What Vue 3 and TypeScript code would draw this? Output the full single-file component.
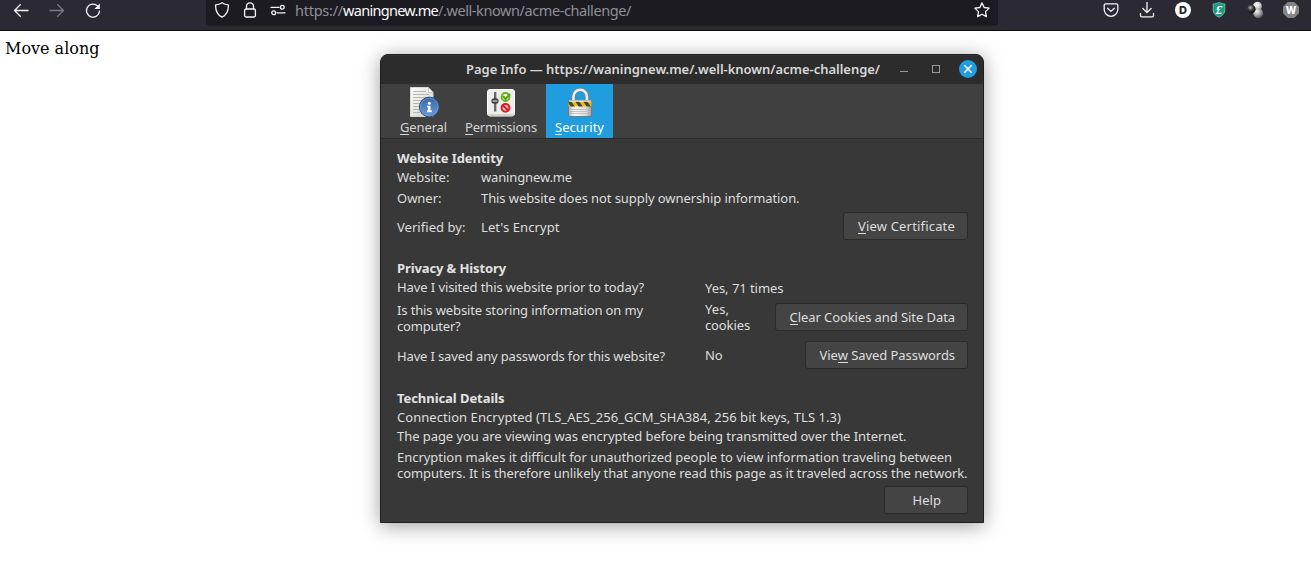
<script setup lang="ts">
import type { Directive } from 'vue'

interface ToolbarTab {
  id: string
  key: string
  rest: string
  width: number
  active: boolean
}

const tabs: ToolbarTab[] = [
  { id: 'general', key: 'G', rest: 'eneral', width: 47, active: false },
  { id: 'permissions', key: 'P', rest: 'ermissions', width: 72, active: false },
  { id: 'security', key: 'S', rest: 'ecurity', width: 49, active: true },
]

/* Tracks a single line of text so that it spans the given width in pixels. */
const vFit: Directive<HTMLElement, number> = {
  mounted(el, binding) {
    const count = (el.textContent ?? '').length
    const natural = el.getBoundingClientRect().width
    el.style.letterSpacing = `${(binding.value - natural) / count}px`
  },
}
</script>

<template>
  <div class="screen">
    <header class="chrome">
      <nav class="nav">
        <svg class="ico" viewBox="0 0 16 16"><path d="M15 8.500H1.800M7.300 2.700 1.500 8.500l5.800 5.800" /></svg>
        <svg class="ico dim" viewBox="0 0 16 16"><path d="M1 8.500h13.200M8.700 2.700l5.800 5.800-5.800 5.800" /></svg>
        <svg class="ico" viewBox="0 0 16 16">
          <path d="M12.700 4.100A6.500 6.500 0 1 0 14.500 9.100" />
          <path class="solid" d="M14.800 1.500V7H9.300z" />
        </svg>
      </nav>
      <div class="urlbar">
        <svg class="ico" viewBox="0 0 16 16"><path d="M8 .8c2 1.500 4.200 2 6.400 2.100C14.600 8.200 12.800 12.800 8 15.200 3.200 12.800 1.400 8.200 1.600 2.900 3.800 2.800 6 2.300 8 .8z" /></svg>
        <svg class="ico" viewBox="0 0 16 16"><path d="M4.500 7V4.300a3.500 3.500 0 0 1 7 0V7" /><rect x="2.600" y="7" width="10.800" height="8" rx="1.500" /></svg>
        <svg class="ico" viewBox="0 0 16 16"><path d="M1 5.300h8M7 10.800h8" /><circle cx="12.300" cy="5.300" r="1.900" /><circle cx="3.700" cy="10.800" r="1.900" /></svg>
        <div class="address">
          <span v-fit="48">https://</span><span v-fit="95" class="host">waningnew.me</span><span v-fit="193">/.well-known/acme-challenge/</span>
        </div>
        <svg class="ico star" viewBox="0 0 16 16"><path d="m8 .9 2.150 4.600 5 .65-3.650 3.500.9 5L8 12.250l-4.400 2.400.9-5L.85 6.150l5-.65z" /></svg>
      </div>
      <div class="extensions">
        <svg class="ico" viewBox="0 0 16 16"><path d="M2.600 1.800h10.800c.8 0 1.400.6 1.400 1.400v4.300a6.800 6.800 0 0 1-13.600 0V3.200c0-.8.6-1.400 1.400-1.400z" /><path d="m4.600 6.200 3.400 3.200 3.400-3.200" /></svg>
        <svg class="ico" viewBox="0 0 16 16"><path d="M8 .3v9.900M3.900 6.500 8 10.600l4.100-4.100M1.500 11.500v2c0 .8.5 1.300 1.300 1.300h10.400c.8 0 1.300-.5 1.300-1.300v-2" /></svg>
        <span class="badge round">D</span>
        <span class="badge-shield">
          <svg viewBox="0 0 16 16"><path d="M8 .4c2 1 3.900 1.500 5.800 1.500v6.400c0 3.300-2.500 5.300-5.800 7-3.300-1.700-5.800-3.700-5.800-7V1.900C4.100 1.900 6 1.400 8 .4z" fill="#1d9b80" stroke="#79c8b5" stroke-width=".8" /></svg>
          <i>£</i>
        </span>
        <svg class="spheres" viewBox="0 0 18 18">
          <defs>
            <radialGradient id="light" cx=".4" cy=".35" r=".7"><stop offset="0" stop-color="#fff" /><stop offset=".55" stop-color="#d0d0d0" /><stop offset="1" stop-color="#777" /></radialGradient>
            <radialGradient id="mid" cx=".35" cy=".3" r=".75"><stop offset="0" stop-color="#f4f4f4" /><stop offset=".5" stop-color="#aaa" /><stop offset="1" stop-color="#555" /></radialGradient>
            <radialGradient id="dark" cx=".4" cy=".35" r=".65"><stop offset="0" stop-color="#bbb" /><stop offset=".45" stop-color="#444" /><stop offset="1" stop-color="#080808" /></radialGradient>
          </defs>
          <circle cx="11.500" cy="5.200" r="4.500" fill="url(#light)" />
          <circle cx="12.200" cy="12.300" r="4.900" fill="url(#mid)" />
          <circle cx="5.300" cy="8" r="4.300" fill="url(#dark)" />
        </svg>
        <span class="badge octagon">W</span>
      </div>
    </header>

    <main class="page">
      <p class="message">Move along</p>

      <section class="dialog">
        <div class="titlebar">
          <h1><span v-fit="414">Page Info — https://waningnew.me/.well-known/acme-challenge/</span></h1>
          <div class="controls">
            <span class="minimize"></span>
            <span class="maximize"></span>
            <span class="close"><svg viewBox="0 0 18 18"><path d="m5.300 5.300 7.400 7.400M12.700 5.300l-7.400 7.400" /></svg></span>
          </div>
        </div>

        <div class="tabs">
          <div v-for="tab in tabs" :key="tab.id" class="tab" :class="[tab.id, { active: tab.active }]">
            <svg v-if="tab.id === 'general'" viewBox="0 0 32 32">
              <defs>
                <linearGradient id="paper" x2="1" y2="1"><stop stop-color="#fdfdfb" /><stop offset="1" stop-color="#d0d1ca" /></linearGradient>
                <linearGradient id="info" x2="0" y2="1"><stop stop-color="#3465a8" /><stop offset="1" stop-color="#6c9bd4" /></linearGradient>
              </defs>
              <path d="M3.500 1.500h18l4.500 5v24H3.500z" fill="url(#paper)" stroke="#d8d9d4" />
              <path d="M6 5.500h13M6 8.500h16M6 11.500h16M6 14.500h15M6 17.500h9M6 20.500h6M6 23.500h6M6 26.500h7" stroke="#b4b6b0" />
              <path d="M21.500 1.500v5H26z" fill="#fff" stroke="#aaa" stroke-width=".6" />
              <circle cx="22.300" cy="21" r="9.900" fill="url(#info)" stroke="#244b86" />
              <circle cx="22.300" cy="21" r="8.800" fill="none" stroke="#6f9ace" stroke-width=".8" />
              <circle cx="22.300" cy="17.300" r="1.500" fill="#fff" />
              <path d="M20 19.700h3.500v4.600h1.200v1.900H20v-1.900h1.100v-2.800H20z" fill="#fff" />
            </svg>
            <svg v-else-if="tab.id === 'permissions'" viewBox="0 0 32 32">
              <rect x="2.500" y="3.500" width="27" height="26.500" rx="2.500" fill="#ededeb" stroke="#fff" />
              <path d="M3 29h26" stroke="#c7c7c3" stroke-width="1.500" />
              <path d="M10 6v19.500" stroke="#444" stroke-width="1.600" />
              <path d="M11.500 6v19.500" stroke="#bbb" stroke-width="1" />
              <rect x="7" y="13" width="6" height="4" rx="1" fill="#565b5a" stroke="#252828" />
              <path d="M7.500 15h5" stroke="#ddd" />
              <circle cx="20.500" cy="11" r="4" fill="#fff" stroke="#61b516" stroke-width="1.800" />
              <path d="m17.800 10 2.700 3 4.500-5" fill="none" stroke="#57a80c" stroke-width="2.300" />
              <circle cx="20.500" cy="21.800" r="3.900" fill="#f7caca" stroke="#e01b24" stroke-width="2" />
              <path d="m17.800 19.100 5.400 5.400" stroke="#d3121b" stroke-width="1.800" />
            </svg>
            <svg v-else viewBox="0 0 32 32">
              <defs>
                <linearGradient id="metal"><stop stop-color="#aaa" /><stop offset=".25" stop-color="#f8f8f5" /><stop offset=".75" stop-color="#dededb" /><stop offset="1" stop-color="#999" /></linearGradient>
                <clipPath id="band"><rect x="4.500" y="15.500" width="23" height="5" /></clipPath>
              </defs>
              <path d="M9.500 15.500V10.500a6.700 6.700 0 0 1 13.400 0v5" fill="none" stroke="#777c78" stroke-width="4" />
              <path d="M9.500 15.500V10.500a6.700 6.700 0 0 1 13.400 0v5" fill="none" stroke="#ededea" stroke-width="2.600" />
              <rect x="4.500" y="14.500" width="23" height="16" rx="1.500" fill="url(#metal)" stroke="#777a75" />
              <path d="M5.500 23.500h21M5.500 25.500h21M5.500 27.500h21" stroke="#b9bbb7" stroke-width=".8" />
              <g clip-path="url(#band)">
                <path d="M4 15.500h24v5H4z" fill="#e3bd22" />
                <path d="m3 15 4 6h4l-4-6zm8 0 4 6h4l-4-6zm8 0 4 6h4l-4-6z" fill="#4a4528" />
              </g>
              <path d="M5 15h22" stroke="#fff" />
            </svg>
            <span v-fit="tab.width"><u>{{ tab.key }}</u>{{ tab.rest }}</span>
          </div>
        </div>

        <div class="body">
          <section class="identity">
            <h2><span v-fit="106">Website Identity</span></h2>
            <dl>
              <dt><span v-fit="52.500">Website:</span></dt>
              <dd><span v-fit="91">waningnew.me</span></dd>
              <dt><span v-fit="44.500">Owner:</span></dt>
              <dd><span v-fit="318.500">This website does not supply ownership information.</span></dd>
            </dl>
            <div class="verified">
              <div><span v-fit="68.500">Verified by:</span></div>
              <div><span v-fit="78.500">Let's Encrypt</span></div>
              <button class="certificate"><span v-fit="97"><u>V</u>iew Certificate</span></button>
            </div>
          </section>

          <section class="privacy">
            <h2><span v-fit="109">Privacy &amp; History</span></h2>
            <div class="row visited">
              <div><span v-fit="247">Have I visited this website prior to today?</span></div>
              <div class="answer"><span v-fit="78.500">Yes, 71 times</span></div>
            </div>
            <div class="row storing">
              <div><span v-fit="246">Is this website storing information on my</span><br /><span v-fit="63.500">computer?</span></div>
              <div class="answer"><span v-fit="24">Yes,</span><br /><span v-fit="45">cookies</span></div>
              <button class="cookies"><span v-fit="165.500"><u>C</u>lear Cookies and Site Data</span></button>
            </div>
            <div class="row saved">
              <div><span v-fit="268">Have I saved any passwords for this website?</span></div>
              <div class="answer"><span v-fit="17.500">No</span></div>
              <button class="passwords"><span v-fit="135.500">Vie<u>w</u> Saved Passwords</span></button>
            </div>
          </section>

          <section class="technical">
            <h2><span v-fit="107.500">Technical Details</span></h2>
            <p><span v-fit="444">Connection Encrypted (TLS_AES_256_GCM_SHA384, 256 bit keys, TLS 1.3)</span></p>
            <p><span v-fit="509.500">The page you are viewing was encrypted before being transmitted over the Internet.</span></p>
            <p class="explain">
              <span v-fit="555">Encryption makes it difficult for unauthorized people to view information traveling between</span><br />
              <span v-fit="570.500">computers. It is therefore unlikely that anyone read this page as it traveled across the network.</span>
            </p>
          </section>

          <footer><button class="help"><span v-fit="28.500">Help</span></button></footer>
        </div>
      </section>
    </main>
  </div>
</template>

<style>
html, body { margin: 0; background: #fff; overflow: hidden; }
</style>

<style scoped>
* { box-sizing: border-box; }
.screen { width: 1311px; height: 573px; overflow: hidden; background: #fff; font: 13px/16px "Noto Sans", sans-serif; }
span { white-space: nowrap; }

.chrome { display: flex; height: 31px; background: #2b2a33; border-bottom: 1px solid #0c0c0d; }
.ico { display: block; flex: none; width: 16px; height: 16px; margin-top: 2px; fill: none; stroke: #f4f4f6; stroke-width: 1.3; stroke-linecap: round; stroke-linejoin: round; }
.dim { stroke: #7b7a81; }
.solid { fill: #f4f4f6; stroke: none; }
.nav { display: flex; gap: 20px; width: 206px; padding-left: 13px; }
.urlbar { display: flex; gap: 12px; width: 792px; height: 26px; padding: 0 8px; background: #1c1b22; border-radius: 0 0 4px 4px; }
.address { flex: 1; margin-left: -3px; font-size: 14.500px; line-height: 20px; color: #8f8f95; white-space: nowrap; }
.address .host { color: #fbfbfe; }
.extensions { display: flex; gap: 20px; margin-left: 105px; }
.badge { width: 16px; height: 16px; margin-top: 2px; font: 800 11px/16px Inter, sans-serif; text-align: center; }
.round { border-radius: 50%; background: #fff; color: #26252c; }
.octagon { background: #858585; color: #fff; font-size: 10px; clip-path: polygon(30% 0, 70% 0, 100% 30%, 100% 70%, 70% 100%, 30% 100%, 0 70%, 0 30%); }
.badge-shield { display: grid; width: 16px; height: 16px; margin-top: 2px; }
.badge-shield svg, .badge-shield i { grid-area: 1 / 1; width: 16px; height: 16px; }
.badge-shield i { color: #fff; font: italic bold 13px/16px "Liberation Serif", serif; text-align: center; }
.spheres { width: 18px; height: 18px; margin: 1px -1px 0; }

.page { height: 542px; padding-top: 23px; display: grid; grid-template-columns: 380px 604px; align-items: start; }
.message { margin: -15px 0 0 5px; font: 16px/19px "DejaVu Serif", serif; color: #000; }

.dialog { width: 604px; height: 469px; border: 1px solid #1e1e1e; border-radius: 8px 8px 0 0; background: #383838; color: #dedede; box-shadow: 0 3px 20px rgba(0, 0, 0, .38); overflow: hidden; }
.titlebar { display: flex; height: 29px; background: #2c2c2c; box-shadow: inset 0 1px #353535; }
h1 { width: 500px; margin: 0 0 0 85px; font-size: 13px; font-weight: 600; line-height: 28px; color: #d8d8d8; }
.controls { display: flex; flex: none; gap: 18px; margin-left: -66px; padding-top: 5px; }
.minimize { width: 8px; height: 12px; border-bottom: 1px solid #999; margin-right: 6px; }
.maximize { width: 8px; height: 8px; margin: 5px 1px 0 0; border: 1px solid #999; }
.close { width: 18px; height: 18px; border-radius: 50%; background: #209ddf; }
.close svg { display: block; stroke: #fff; stroke-width: 1.500; fill: none; }

.tabs { display: flex; height: 55px; padding-left: 10px; background: #404040; border-bottom: 1px solid #2a2a2a; }
.tab { display: flex; flex-direction: column; align-items: flex-start; padding-top: 2px; color: #d4d4d4; }
.tab svg { width: 32px; height: 32px; }
.tab span { margin-top: 1px; }
.general { width: 65px; padding-left: 9px; }
.general svg { margin-left: 7px; }
.permissions { width: 90px; padding-left: 9px; }
.permissions svg { margin-left: 20px; }
.security { width: 67px; padding-left: 9px; }
.security svg { margin-left: 9px; }
.active { background: #209ddf; color: #fff; }
u { display: inline-block; height: 15px; line-height: 16px; vertical-align: top; text-decoration: none; box-shadow: 0 1px 0 currentColor; }

.body { padding: 11px 15px 0 16px; }
h2 { margin: 0; height: 16px; font-size: 13px; font-weight: 700; line-height: 16px; color: #e3e3e3; }
dl { display: grid; grid-template-columns: 84px 1fr; row-gap: 5px; margin: 3px 0 0; }
dt, dd { margin: 0; height: 16px; }
.verified { display: grid; grid-template-columns: 84px 1fr auto; margin-top: 6px; }
.verified > div { padding-top: 7px; }
button { height: 28px; padding: 0 12px 0 14px; border: 1px solid #2a2a2a; border-radius: 3px; background: #444; color: #dedede; font: 13px/16px "Noto Sans", sans-serif; text-align: left; }
.certificate { width: 125px; }
.privacy { margin-top: 20px; }
.row { display: grid; grid-template-columns: 308px 1fr auto; }
.visited { margin-top: 3px; height: 23px; }
.visited .answer { padding-top: 1px; }
.storing .answer { margin-top: -1px; }
.cookies { width: 193px; padding-left: 13.500px; margin-top: 1px; }
.saved { margin-top: 7px; }
.saved > div { padding-top: 7px; }
.saved > .answer { padding-top: 6px; }
.passwords { width: 163px; padding-left: 13.500px; }
.technical { margin-top: 21px; }
p { margin: 3px 0 0; }
.technical .explain { margin-top: 5px; }
footer { display: flex; justify-content: flex-end; margin-top: 5px; }
.help { width: 84px; padding-left: 27.500px; }
</style>
